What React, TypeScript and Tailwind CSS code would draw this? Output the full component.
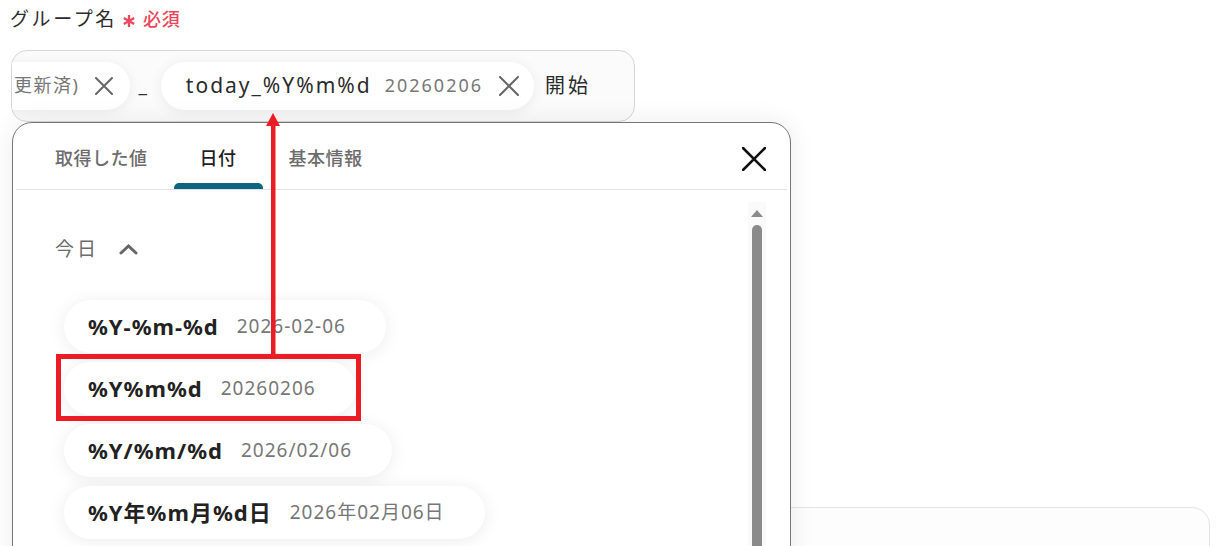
const formats = [
  { fmt: "%Y-%m-%d", value: "2026-02-06" },
  { fmt: "%Y%m%d", value: "20260206" },
  { fmt: "%Y/%m/%d", value: "2026/02/06" },
  { fmt: "%Y年%m月%d日", value: "2026年02月06日" },
];

const tabs = [
  { label: "取得した値", active: false },
  { label: "日付", active: true },
  { label: "基本情報", active: false },
];

function Cross({ size, width = 2, className = "" }: { size: number; width?: number; className?: string }) {
  return (
    <svg width={size} height={size} viewBox={`0 0 ${size} ${size}`} className={className}>
      <path
        d={`M1 1 L${size - 1} ${size - 1} M${size - 1} 1 L1 ${size - 1}`}
        stroke="currentColor"
        strokeWidth={width}
        strokeLinecap="round"
        fill="none"
      />
    </svg>
  );
}

function Chip({ children, className = "" }: { children: React.ReactNode; className?: string }) {
  return (
    <div
      className={`flex h-[48px] shrink-0 items-center rounded-full bg-white shadow-[0_2px_14px_rgba(0,0,0,0.07)] ${className}`}
    >
      {children}
    </div>
  );
}

export default function App() {
  return (
    <div className="relative h-[546px] w-[1217px] overflow-hidden bg-white font-['Noto_Sans','Noto_Sans_CJK_JP',sans-serif]">
      {/* underlying form */}
      <div className="pl-[10px] pt-[5px]">
        <div className="flex items-center">
          <span className="text-[19px] tracking-[2.6px] text-[#2b2b2b]">グループ名</span>
          <svg width="14" height="14" viewBox="0 0 14 14" className="ml-[5px] mt-[4px] text-[#e9475c]">
            <path d="M7 1 V13 M1.8 4 L12.2 10 M12.2 4 L1.8 10" stroke="currentColor" strokeWidth="2.3" fill="none" />
          </svg>
          <span className="ml-[7px] text-[18px] font-medium tracking-[1px] text-[#e9475c]">必須</span>
        </div>

        <div className="ml-[1px] mt-[16px] flex h-[72px] w-[624px] items-center overflow-hidden rounded-[16px] border border-[#d6d6d6] bg-[#fbfbfb]">
          <div className="-ml-[24px] flex items-center">
            <Chip className="pl-[26px] pr-[17px]">
              <span className="text-[18px] tracking-[1.5px] text-[#777]">更新済)</span>
              <Cross size={18} className="ml-[16px] text-[#666]" />
            </Chip>
            <span className="ml-[8px] mr-[14px] text-[19px] text-[#333]">_</span>
            <Chip className="pl-[25px] pr-[15px]">
              <span className="text-[21px] tracking-[2px] text-[#2b2b2b]">today_%Y%m%d</span>
              <span className="ml-[13px] text-[18px] tracking-[2px] text-[#777]">20260206</span>
              <Cross size={20} className="ml-[16px] text-[#666]" />
            </Chip>
            <span className="ml-[11px] text-[20px] tracking-[3px] text-[#2b2b2b]">開始</span>
          </div>
        </div>

        <div className="ml-[690px] mt-[385px] h-[120px] w-[510px] rounded-[18px] border border-[#e3e3e3] bg-[#fdfdfd]" />
      </div>

      {/* popup */}
      <div className="absolute left-[12px] top-[122px] h-[470px] w-[779px] rounded-[20px] border border-[#767676] bg-white px-[3px] shadow-[0_0_26px_rgba(0,0,0,0.08)]">
        <div className="flex h-[67px] items-stretch border-b border-[#e2e2e2] pl-[13px]">
          {tabs.map((t) => (
            <div key={t.label} className="relative flex items-center px-[26px] pt-[4px]">
              <span
                className={`text-[18px] font-medium tracking-[0.5px] ${t.active ? "text-[#1f1f1f]" : "text-[#6c6c6c]"}`}
              >
                {t.label}
              </span>
              {t.active && (
                <div className="absolute inset-x-0 bottom-0 h-[6px] rounded-t-[5px] bg-[#0c6680]" />
              )}
            </div>
          ))}
          <div className="ml-auto mr-[21px] flex items-center pt-[5px]">
            <Cross size={24} width={2.6} className="text-[#111]" />
          </div>
        </div>

        <div className="flex">
          <div className="flex-1 pl-[39px] pt-[45px]">
            <div className="flex items-center">
              <span className="text-[19px] tracking-[3px] text-[#6c6c6c]">今日</span>
              <svg width="19" height="11" viewBox="0 0 19 11" className="ml-[20px] text-[#666]">
                <path d="M2 9 L9.5 2 L17 9" stroke="currentColor" strokeWidth="3" fill="none" strokeLinecap="round" />
              </svg>
            </div>
            <div className="mt-[36px] flex flex-col items-start gap-[9px] pl-[9px]">
              {formats.map((f) => (
                <div
                  key={f.fmt}
                  className="flex h-[53px] items-center rounded-full bg-white pl-[24px] pr-[40px] shadow-[0_2px_18px_rgba(0,0,0,0.08)]"
                >
                  <span className="text-[22px] font-bold tracking-[1px] text-[#222]">{f.fmt}</span>
                  <span className="ml-[18px] text-[19px] tracking-[1px] text-[#777]">{f.value}</span>
                </div>
              ))}
            </div>
          </div>

          <div className="mr-[21px] mt-[12px] flex w-[18px] flex-col items-center bg-[#fafafa]">
            <div className="mt-[8px] h-0 w-0 border-x-[6px] border-b-[7px] border-x-transparent border-b-[#8a8a8a]" />
            <div className="mt-[8px] h-[330px] w-[10px] rounded-t-full bg-[#8a8a8a]" />
          </div>
        </div>
      </div>

      {/* annotation */}
      <div className="absolute left-[56px] top-[354px] h-[67px] w-[305px] border-[5px] border-[#ec1c24]" />
      <svg className="absolute left-[266px] top-[113px]" width="14" height="243" viewBox="0 0 14 243">
        <polygon points="7,0 0,13 14,13" fill="#ec1c24" />
        <rect x="5" y="12" width="4.5" height="231" fill="#ec1c24" />
      </svg>
    </div>
  );
}
